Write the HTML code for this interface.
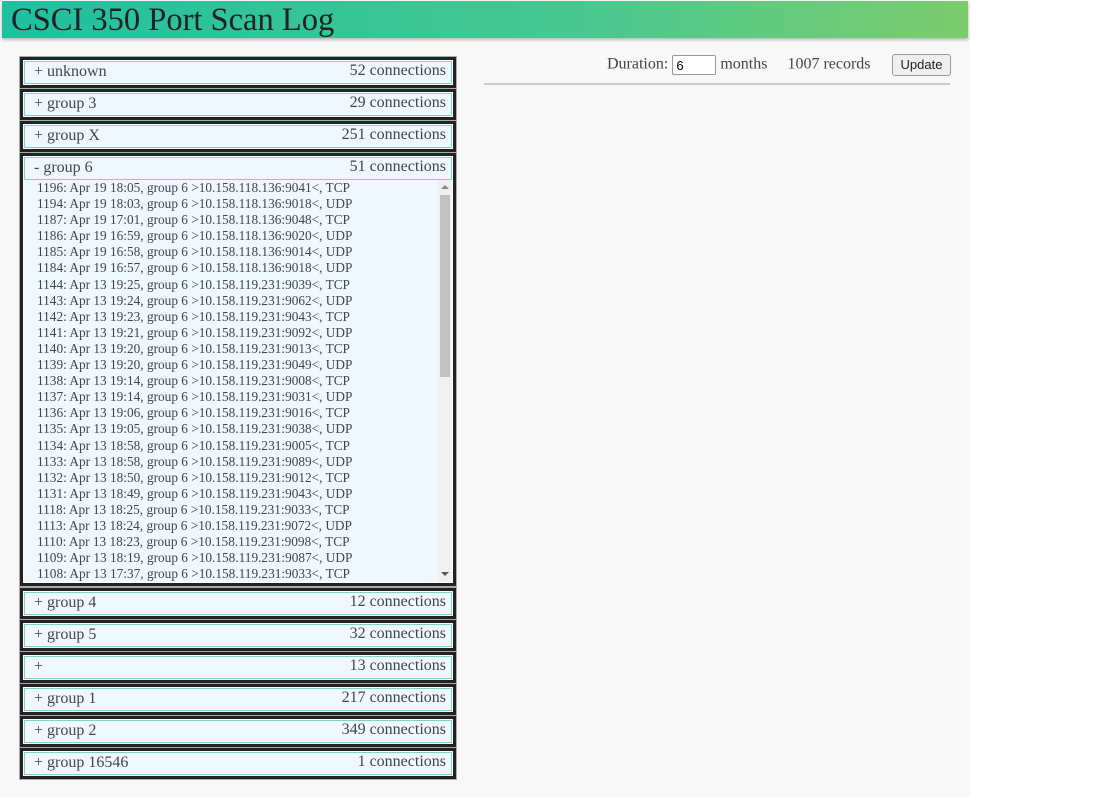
<!DOCTYPE html>
<html><head><meta charset="utf-8"><style>
body{margin:0;background:#fff;font-family:"Liberation Serif",serif;}
#wrap{position:absolute;left:0;top:0;width:970px;height:797px;background:#f8f8f8;}
#hdr{position:absolute;left:2px;top:1px;width:966px;height:37px;background:linear-gradient(90deg,#1ec0a0,#48c890 60%,#7ccc6c);box-shadow:0 2px 3px rgba(0,0,0,.25);}
#hdr span{position:absolute;left:9px;top:1px;font-size:32.5px;color:#222;}
.g{position:absolute;left:20px;width:428px;border:3px solid #222;outline:1px solid #aaa;padding:1px;background:#fff;}
.h{height:21px;border:1px solid #7fd2c6;background:#f0f8ff;position:relative;font-size:16px;color:#444;}
.h .l{position:absolute;left:9px;top:1px;}
.h .r{position:absolute;right:5px;top:0px;}
.list{height:402px;background:#f0f8ff;position:relative;overflow:hidden;}
.list .row{font-size:13.3px;color:#444;height:16.1px;line-height:16px;padding-left:13px;white-space:nowrap;}
.sb{position:absolute;right:0;top:0;width:14px;height:402px;background:#f0f0f0;}
.th{position:absolute;left:2px;top:15px;width:10px;height:182px;background:#c1c1c1;}
#ctl{position:absolute;left:607px;top:55px;font-size:16px;color:#444;}
#ctl input{width:36px;height:18px;border:1px solid #999;border-radius:2px;font-size:13px;padding:0 3px;vertical-align:middle;font-family:"Liberation Sans",sans-serif;}
#btn{position:absolute;left:892px;top:54px;width:57px;height:20px;border:1px solid #999;border-radius:3px;background:#efefef;font:13px "Liberation Sans",sans-serif;color:#222;text-align:center;line-height:20px;}
#line{position:absolute;left:484px;top:83px;width:466px;height:2px;background:#ccc;}
</style></head><body><div id="wrap">
<div id="hdr"><span>CSCI 350 Port Scan Log</span></div>
<div id="ctl">Duration: <input value="6"> months &nbsp;&nbsp;&nbsp; 1007 records</div>
<div id="btn">Update</div>
<div id="line"></div>

<div class="g" style="top:57px"><div class="h"><span class="l">+ unknown</span><span class="r">52 connections</span></div></div>
<div class="g" style="top:89px"><div class="h"><span class="l">+ group 3</span><span class="r">29 connections</span></div></div>
<div class="g" style="top:121px"><div class="h"><span class="l">+ group X</span><span class="r">251 connections</span></div></div>
<div class="g" style="top:153px"><div class="h"><span class="l">- group 6</span><span class="r">51 connections</span></div>
<div class="list">
<div class="row">1196: Apr 19 18:05, group 6 &gt;10.158.118.136:9041&lt;, TCP</div>
<div class="row">1194: Apr 19 18:03, group 6 &gt;10.158.118.136:9018&lt;, UDP</div>
<div class="row">1187: Apr 19 17:01, group 6 &gt;10.158.118.136:9048&lt;, TCP</div>
<div class="row">1186: Apr 19 16:59, group 6 &gt;10.158.118.136:9020&lt;, UDP</div>
<div class="row">1185: Apr 19 16:58, group 6 &gt;10.158.118.136:9014&lt;, UDP</div>
<div class="row">1184: Apr 19 16:57, group 6 &gt;10.158.118.136:9018&lt;, UDP</div>
<div class="row">1144: Apr 13 19:25, group 6 &gt;10.158.119.231:9039&lt;, TCP</div>
<div class="row">1143: Apr 13 19:24, group 6 &gt;10.158.119.231:9062&lt;, UDP</div>
<div class="row">1142: Apr 13 19:23, group 6 &gt;10.158.119.231:9043&lt;, TCP</div>
<div class="row">1141: Apr 13 19:21, group 6 &gt;10.158.119.231:9092&lt;, UDP</div>
<div class="row">1140: Apr 13 19:20, group 6 &gt;10.158.119.231:9013&lt;, TCP</div>
<div class="row">1139: Apr 13 19:20, group 6 &gt;10.158.119.231:9049&lt;, UDP</div>
<div class="row">1138: Apr 13 19:14, group 6 &gt;10.158.119.231:9008&lt;, TCP</div>
<div class="row">1137: Apr 13 19:14, group 6 &gt;10.158.119.231:9031&lt;, UDP</div>
<div class="row">1136: Apr 13 19:06, group 6 &gt;10.158.119.231:9016&lt;, TCP</div>
<div class="row">1135: Apr 13 19:05, group 6 &gt;10.158.119.231:9038&lt;, UDP</div>
<div class="row">1134: Apr 13 18:58, group 6 &gt;10.158.119.231:9005&lt;, TCP</div>
<div class="row">1133: Apr 13 18:58, group 6 &gt;10.158.119.231:9089&lt;, UDP</div>
<div class="row">1132: Apr 13 18:50, group 6 &gt;10.158.119.231:9012&lt;, TCP</div>
<div class="row">1131: Apr 13 18:49, group 6 &gt;10.158.119.231:9043&lt;, UDP</div>
<div class="row">1118: Apr 13 18:25, group 6 &gt;10.158.119.231:9033&lt;, TCP</div>
<div class="row">1113: Apr 13 18:24, group 6 &gt;10.158.119.231:9072&lt;, UDP</div>
<div class="row">1110: Apr 13 18:23, group 6 &gt;10.158.119.231:9098&lt;, TCP</div>
<div class="row">1109: Apr 13 18:19, group 6 &gt;10.158.119.231:9087&lt;, UDP</div>
<div class="row">1108: Apr 13 17:37, group 6 &gt;10.158.119.231:9033&lt;, TCP</div>
<div class="sb"><svg style="position:absolute;left:3px;top:4px" width="8" height="6"><path d="M0 5L4 1L8 5Z" fill="#888"/></svg><div class="th"></div><svg style="position:absolute;left:3px;top:391px" width="8" height="6"><path d="M0 1L4 5L8 1Z" fill="#555"/></svg></div>
</div></div>
<div class="g" style="top:588px"><div class="h"><span class="l">+ group 4</span><span class="r">12 connections</span></div></div>
<div class="g" style="top:620px"><div class="h"><span class="l">+ group 5</span><span class="r">32 connections</span></div></div>
<div class="g" style="top:652px"><div class="h"><span class="l">+</span><span class="r">13 connections</span></div></div>
<div class="g" style="top:684px"><div class="h"><span class="l">+ group 1</span><span class="r">217 connections</span></div></div>
<div class="g" style="top:716px"><div class="h"><span class="l">+ group 2</span><span class="r">349 connections</span></div></div>
<div class="g" style="top:748px"><div class="h"><span class="l">+ group 16546</span><span class="r">1 connections</span></div></div>
</div></body></html>
